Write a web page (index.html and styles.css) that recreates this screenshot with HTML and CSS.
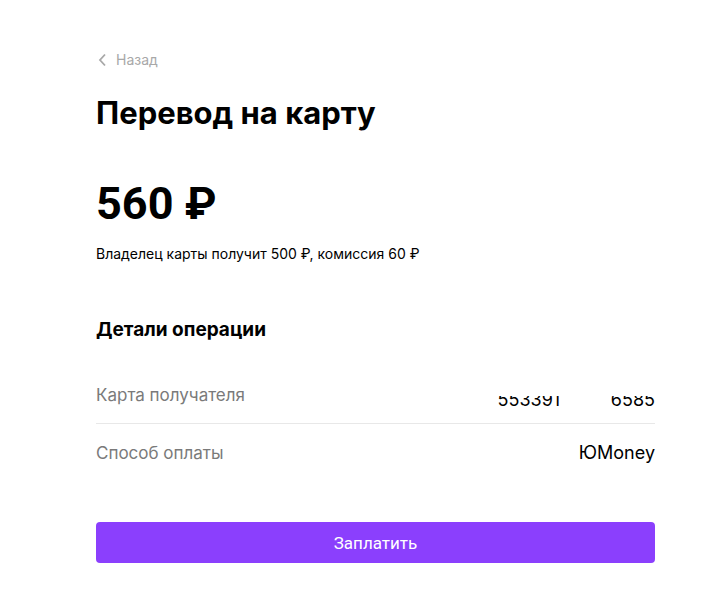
FILE: index.html
```html
<!DOCTYPE html>
<html lang="ru">
<head>
  <meta charset="UTF-8">
  <title>Перевод на карту</title>
  <meta name="viewport" content="width=device-width, initial-scale=1">
  <link rel="stylesheet" href="styles.css">
</head>
<body>

  <div class="page">
    <a class="back" href="#">
      <svg width="9" height="14" viewBox="0 0 9 14"><path d="M7 1.5 L2 7 L7 12.5" fill="none" stroke="#a8a8a8" stroke-width="1.8"/></svg>
      <span>Назад</span>
    </a>

    <h1>Перевод на карту</h1>

    <div class="amount">560 ₽</div>
    <p class="note">Владелец карты получит 500 ₽, комиссия 60 ₽</p>

    <h2>Детали операции</h2>

    <div class="details">
      <div class="row">
        <span class="label">Карта получателя</span>
        <span class="value card"><span class="card-num">553391 <span class="mask">••••</span> 6585</span></span>
      </div>
      <div class="row">
        <span class="label">Способ оплаты</span>
        <span class="value">ЮMoney</span>
      </div>
    </div>

    <button class="pay">Заплатить</button>
  </div>

</body>
</html>
```

FILE: styles.css
```css
body {
  margin: 0;
  font-family: Inter, "Noto Sans", sans-serif;
  background-color: #fff;
  color: #000;
}

.page {
  width: 559px;
  padding: 51px 0 0 96px;
}

.back {
  display: flex;
  align-items: center;
  gap: 9px;
  color: #a8a8a8;
  font-size: 14px;
  text-decoration: none;
  margin-left: 2px;
}

h1 {
  font-size: 31px;
  font-weight: 700;
  margin: 25px 0 0;
  line-height: 40px;
}

.amount {
  font-family: Roboto, sans-serif;
  font-size: 45px;
  font-weight: 700;
  line-height: 56px;
  margin-top: 43px;
}

.note {
  font-size: 14px;
  line-height: 18px;
  margin: 13px 0 0;
}

h2 {
  font-size: 19px;
  font-weight: 700;
  line-height: 24px;
  margin: 55px 0 0;
}

.details {
  margin-top: 24px;
}

.row {
  display: flex;
  justify-content: space-between;
  align-items: center;
  height: 57px;
  font-size: 17px;
}

.row + .row {
  border-top: 1px solid #e8e8e8;
}

.label {
  color: #7a7a7a;
}

.value {
  font-size: 18px;
}

.card {
  height: 10px;
  overflow: hidden;
  display: flex;
  align-items: flex-end;
  margin-top: 12px;
}

.card-num {
  line-height: 20px;
  margin-bottom: -4px;
}

.mask {
  visibility: hidden;
  letter-spacing: 0;
}

.pay {
  display: block;
  width: 100%;
  height: 41px;
  margin-top: 41px;
  background-color: #8b3ffd;
  color: #fff;
  border: none;
  border-radius: 4px;
  font-family: Roboto, sans-serif;
  font-size: 17px;
  cursor: pointer;
}
```
